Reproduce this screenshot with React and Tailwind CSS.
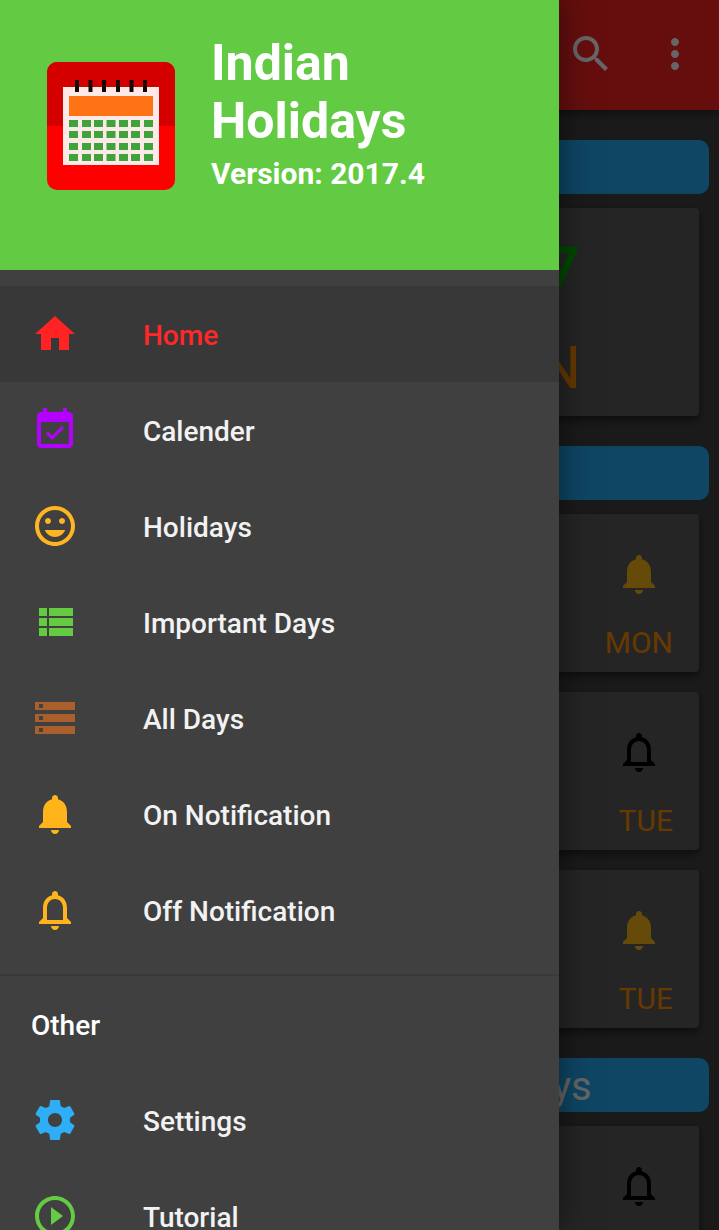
const ICONS = {
  home: "M10 20v-6h4v6h5v-8h3L12 3 2 12h3v8z",
  calendar:
    "M16.53 11.06L15.47 10l-4.88 4.88-2.12-2.12-1.06 1.06L10.59 17l5.94-5.94zM19 3h-1V1h-2v2H8V1H6v2H5c-1.11 0-1.99.9-1.99 2L3 19c0 1.1.89 2 2 2h14c1.1 0 2-.9 2-2V5c0-1.1-.9-2-2-2zm0 16H5V8h14v11z",
  smile:
    "M11.99 2C6.47 2 2 6.48 2 12s4.47 10 9.99 10C17.52 22 22 17.52 22 12S17.52 2 11.99 2zM12 20c-4.42 0-8-3.58-8-8s3.58-8 8-8 8 3.58 8 8-3.58 8-8 8zm3.5-9c.83 0 1.5-.67 1.5-1.5S16.33 8 15.5 8 14 8.67 14 9.5s.67 1.5 1.5 1.5zm-7 0c.83 0 1.5-.67 1.5-1.5S9.33 8 8.5 8 7 8.67 7 9.5 7.67 11 8.5 11zm3.5 6.5c2.33 0 4.31-1.46 5.11-3.5H6.89c.8 2.04 2.78 3.5 5.11 3.5z",
  list: "M4 14h4v-4H4v4zm0 5h4v-4H4v4zM4 9h4V5H4v4zm5 5h12v-4H9v4zm0 5h12v-4H9v4zM9 5v4h12V5H9z",
  storage:
    "M2 20h20v-4H2v4zm2-3h2v2H4v-2zM2 4v4h20V4H2zm4 3H4V5h2v2zm-4 7h20v-4H2v4zm2-3h2v2H4v-2z",
  bell: "M12 22c1.1 0 2-.9 2-2h-4c0 1.1.89 2 2 2zm6-6v-5c0-3.07-1.64-5.64-4.5-6.32V4c0-.83-.67-1.5-1.5-1.5s-1.5.67-1.5 1.5v.68C7.63 5.36 6 7.92 6 11v5l-2 2v1h16v-1l-2-2z",
  bellOutline:
    "M12 22c1.1 0 2-.9 2-2h-4c0 1.1.9 2 2 2zm6-6v-5c0-3.07-1.63-5.64-4.5-6.32V4c0-.83-.67-1.5-1.5-1.5s-1.5.67-1.5 1.5v.68C7.64 5.36 6 7.92 6 11v5l-2 2v1h16v-1l-2-2zm-2 1H8v-6c0-2.48 1.51-4.5 4-4.5s4 2.02 4 4.5v6z",
  settings:
    "M19.43 12.98c.04-.32.07-.64.07-.98s-.03-.66-.07-.98l2.11-1.65c.19-.15.24-.42.12-.64l-2-3.46c-.12-.22-.39-.3-.61-.22l-2.49 1c-.52-.4-1.08-.73-1.69-.98l-.38-2.65C14.46 2.18 14.25 2 14 2h-4c-.25 0-.46.18-.49.42l-.38 2.65c-.61.25-1.17.59-1.69.98l-2.49-1c-.23-.09-.49 0-.61.22l-2 3.46c-.13.22-.07.49.12.64l2.11 1.65c-.04.32-.07.65-.07.98s.03.66.07.98l-2.11 1.65c-.19.15-.24.42-.12.64l2 3.46c.12.22.39.3.61.22l2.49-1c.52.4 1.08.73 1.69.98l.38 2.65c.03.24.24.42.49.42h4c.25 0 .46-.18.49-.42l.38-2.65c.61-.25 1.17-.59 1.69-.98l2.49 1c.23.09.49 0 .61-.22l2-3.46c.12-.22.07-.49-.12-.64l-2.11-1.65zM12 15.5c-1.93 0-3.5-1.57-3.5-3.5s1.57-3.5 3.5-3.5 3.5 1.57 3.5 3.5-1.57 3.5-3.5 3.5z",
  play: "M10 16.5l6-4.5-6-4.5v9zM12 2C6.48 2 2 6.48 2 12s4.48 10 10 10 10-4.48 10-10S17.52 2 12 2zm0 18c-4.41 0-8-3.59-8-8s3.59-8 8-8 8 3.59 8 8-3.59 8-8 8z",
  search:
    "M15.5 14h-.79l-.28-.27C15.41 12.59 16 11.11 16 9.5 16 5.91 13.09 3 9.5 3S3 5.91 3 9.5 5.91 16 9.5 16c1.61 0 3.09-.59 4.23-1.57l.27.28v.79l5 4.99L20.49 19l-4.99-5zm-6 0C7.01 14 5 11.99 5 9.5S7.01 5 9.5 5 14 7.01 14 9.5 11.99 14 9.5 14z",
  more: "M12 8c1.1 0 2-.9 2-2s-.9-2-2-2-2 .9-2 2 .9 2 2 2zm0 2c-1.1 0-2 .9-2 2s.9 2 2 2 2-.9 2-2-.9-2-2-2zm0 6c-1.1 0-2 .9-2 2s.9 2 2 2 2-.9 2-2-.9-2-2-2z",
};

function Icon({ name, className = "" }) {
  return (
    <svg viewBox="0 0 24 24" aria-hidden="true" className={`size-12 shrink-0 fill-current ${className}`}>
      <path d={ICONS[name]} />
    </svg>
  );
}

function AppLogo() {
  const rings = [28, 41.5, 55, 69, 82.5, 96];
  const columns = [22, 35, 47, 59.5, 72, 84, 97];
  const rows = [58, 69, 81, 92];
  return (
    <svg viewBox="0 0 128 128" aria-hidden="true" className="size-32 shrink-0 rounded-[10px]">
      <rect width="128" height="128" fill="#ff0000" />
      <rect width="128" height="64" fill="#d40000" />
      <rect x="16" y="25" width="96" height="78" fill="#fde9e7" />
      <rect x="22" y="34" width="84" height="20" fill="#ff7316" />
      {rings.map((x) => (
        <rect key={x} x={x} y="18" width="4" height="12" fill="#1a0505" />
      ))}
      {rows.map((y) =>
        columns.map((x) => <rect key={`${x}-${y}`} x={x} y={y} width="9" height="7" fill="#3fa33b" />)
      )}
    </svg>
  );
}

function NavItem({ icon, color, active, children }) {
  return (
    <li>
      <a
        href="#"
        aria-current={active ? "page" : undefined}
        className={`flex h-24 items-center gap-16 px-[31px] ${active ? "bg-[#383838] text-[#ff2828]" : "text-[#f2f2f2]"}`}
      >
        <Icon name={icon} className={color} />
        <span className="pt-1">{children}</span>
      </a>
    </li>
  );
}

function SectionBar({ children }) {
  return (
    <h2 className="mx-2.5 mt-[30px] mb-3.5 flex h-[54px] shrink-0 items-center justify-center rounded-[10px] bg-[#23affa] pt-1 text-[40px] leading-[50px] text-white">
      {children}
    </h2>
  );
}

function DayCard({ on, day }) {
  return (
    <article className="mx-5 mb-5 flex h-[158px] shrink-0 flex-col items-end rounded bg-[#5c5c5c] px-[26px] pt-9 shadow-[0_4px_8px_rgba(0,0,0,0.5)]">
      <button
        type="button"
        aria-label={on ? "Turn notification off" : "Turn notification on"}
        className={`mr-2.5 ${on ? "text-[#ffb917]" : "text-black"}`}
      >
        <Icon name={on ? "bell" : "bellOutline"} />
      </button>
      {day && <p className="mt-[27px] text-[30px] leading-9 text-[#ff9000]">{day}</p>}
    </article>
  );
}

export default function App() {
  return (
    <div className="relative h-screen overflow-hidden bg-[#434343] font-['Roboto',sans-serif]">
      <div className="flex h-full flex-col overflow-hidden">
        <header className="flex h-[110px] shrink-0 items-center justify-end gap-9 bg-[#ff2323] pr-5 pb-0.5 text-white shadow-[0_4px_8px_rgba(0,0,0,0.4)]">
          <button type="button" aria-label="Search">
            <Icon name="search" />
          </button>
          <button type="button" aria-label="More options">
            <Icon name="more" />
          </button>
        </header>
        <main className="flex min-h-0 grow flex-col overflow-hidden">
          <SectionBar />
          <article className="mx-5 flex h-[208px] shrink-0 flex-col items-end rounded bg-[#5c5c5c] pt-5 pr-[118px] shadow-[0_4px_8px_rgba(0,0,0,0.5)]">
            <p className="text-[88px] leading-[102px] text-[#00b400]">7</p>
            <p className="text-[60px] leading-[76px] text-[#ff9000]">N</p>
          </article>
          <SectionBar />
          <DayCard on day="MON" />
          <DayCard day="TUE" />
          <DayCard on day="TUE" />
          <div className="-mt-5 flex shrink-0 flex-col">
            <SectionBar>Upcoming Important Days</SectionBar>
          </div>
          <DayCard />
        </main>
      </div>

      <div className="absolute inset-0 bg-black/60" />

      <aside className="absolute inset-y-0 left-0 w-[calc(100%-160px)] max-w-[560px] overflow-hidden bg-[#404040] shadow-[0_0_32px_rgba(0,0,0,0.5)]">
        <div className="flex h-[270px] gap-9 bg-[#63ca43] pl-[47px] text-white">
          <div className="pt-[62px]">
            <AppLogo />
          </div>
          <div className="pt-[34px] font-bold">
            <h1 className="max-w-[240px] text-[50px] leading-[58px]">Indian Holidays</h1>
            <p className="mt-1.5 text-[30px] leading-9">Version: 2017.4</p>
          </div>
        </div>
        <nav className="text-[28px] leading-9 font-medium">
          <ul className="py-4">
            <NavItem icon="home" color="text-[#ff2323]" active>Home</NavItem>
            <NavItem icon="calendar" color="text-[#b400ff]">Calender</NavItem>
            <NavItem icon="smile" color="text-[#ffb422]">Holidays</NavItem>
            <NavItem icon="list" color="text-[#64cb43]">Important Days</NavItem>
            <NavItem icon="storage" color="text-[#aa5f2d]">All Days</NavItem>
            <NavItem icon="bell" color="text-[#ffb41c]">On Notification</NavItem>
            <NavItem icon="bellOutline" color="text-[#ffb41c]">Off Notification</NavItem>
          </ul>
          <h2 className="flex h-[98px] items-center border-t-2 border-[#393939] px-[31px] pt-1 text-white">Other</h2>
          <ul>
            <NavItem icon="settings" color="text-[#2eaef5]">Settings</NavItem>
            <NavItem icon="play" color="text-[#64cb43]">Tutorial</NavItem>
          </ul>
        </nav>
      </aside>
    </div>
  );
}
